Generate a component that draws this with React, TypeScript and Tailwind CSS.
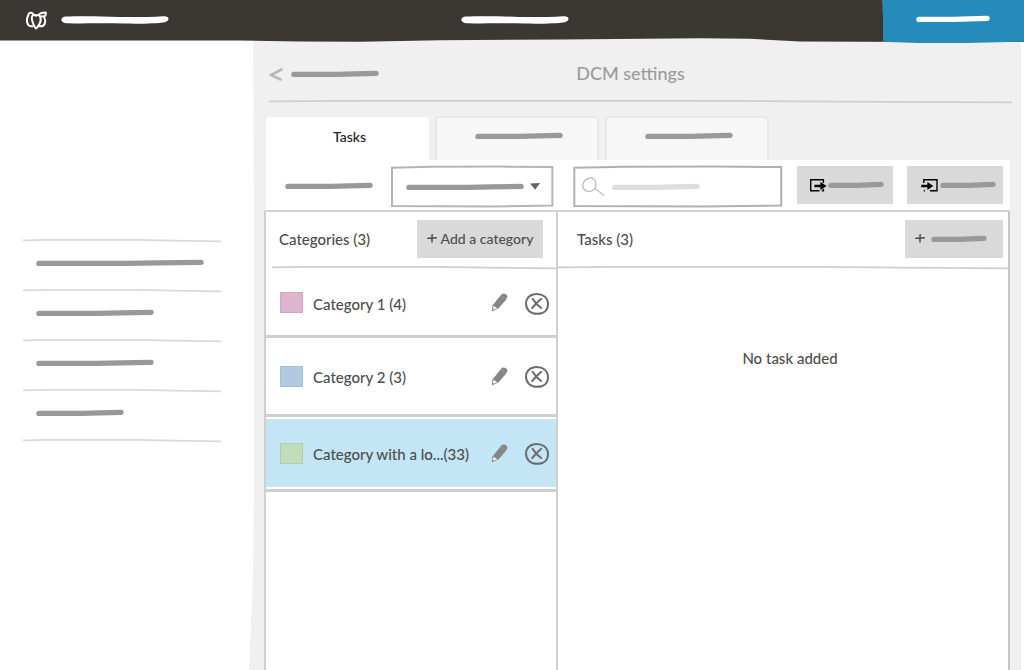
import React from 'react';
import clsx from 'clsx';

interface StrokeProps {
  className?: string;
}

// Placeholder text, drawn as one slightly rising marker stroke.
const Scribble: React.FC<StrokeProps> = ({ className }) => (
  <svg
    viewBox="0 0 100 6"
    preserveAspectRatio="none"
    className={clsx('h-1.5 shrink-0 overflow-visible px-[3px]', className)}
    aria-hidden="true"
  >
    <path
      d="M0 3.4 L52 3.4 L74 2.9 L100 2.4"
      fill="none"
      stroke="currentColor"
      strokeWidth="5.4"
      strokeLinecap="round"
      strokeLinejoin="round"
      vectorEffect="non-scaling-stroke"
    />
  </svg>
);

// Thicker brush stroke used for the titles in the top bar.
const BrushStroke: React.FC<StrokeProps> = ({ className }) => (
  <svg viewBox="0 0 108 8" className={clsx('h-2 shrink-0 text-white', className)} aria-hidden="true">
    <path
      d="M4 .6C18 .1 40 .2 58 1C76 1.2 90 1 102 .2C109-.3 109 4.6 104 6.2C96 7.4 80 8 64 7.6C42 7 20 7.8 5 7.2C-1 6.4-1 1.6 4 .6Z"
      fill="currentColor"
    />
  </svg>
);

const Rule: React.FC<StrokeProps> = ({ className }) => (
  <svg
    viewBox="0 0 200 4"
    preserveAspectRatio="none"
    className={clsx('block h-1 overflow-visible', className)}
    aria-hidden="true"
  >
    <path
      d="M0 1.4 L24 .8 L116 .8 L152 1.6 L200 2.4"
      fill="none"
      stroke="currentColor"
      strokeWidth="1.8"
      vectorEffect="non-scaling-stroke"
    />
  </svg>
);

const SketchFrame: React.FC<StrokeProps> = ({ className }) => (
  <svg
    viewBox="0 0 160 40"
    preserveAspectRatio="none"
    className={clsx('pointer-events-none absolute inset-0 h-full w-full overflow-visible', className)}
    aria-hidden="true"
  >
    <path
      d="M1 1.6 L40 .8 L110 .6 L159.4 1 L159.4 38.6 L100 39.4 L1 39 Z"
      fill="none"
      stroke="currentColor"
      strokeWidth="2"
      vectorEffect="non-scaling-stroke"
    />
  </svg>
);

const Logo: React.FC<StrokeProps> = ({ className }) => (
  <svg
    viewBox="0 0 22 19"
    className={clsx('h-[19px] w-[22px] shrink-0', className)}
    fill="none"
    stroke="#fff"
    strokeWidth="2"
    strokeLinejoin="round"
    aria-hidden="true"
  >
    <path d="M8.4 3.4C7.4 1.4 5 1.2 3.6 2.8C3.6 4.6 2.2 6 2 8C1.8 10 2.2 12.6 3.4 14.2C4.6 15.6 6.4 15.4 8 15.2" />
    <path d="M11 4.8C9.6 3.2 7.2 3.8 6.8 6.4C6.6 8.6 7.2 10.4 8 12C8.6 13.8 9.2 16.2 11 17.4C13 16.4 13.4 14.4 14.6 12.6C15.8 10.8 16 8 15.2 6C14.4 4 12.4 3.4 11 4.8Z" />
    <path d="M14 4.2C14.6 2 17.6 1.6 20.8 1.6C21.2 3.4 20.4 4.8 19.2 5.8C19.2 7.2 20.4 8.4 20.2 10.4C20 12.6 19.2 14.6 17.2 15.2C16 15.6 14.8 15.2 13.8 14.8" />
    <path d="M15.2 5.6C16.6 5 18 5 19.2 5.8" />
  </svg>
);

const PencilIcon = () => (
  <svg viewBox="0 0 17 19" className="h-[19px] w-[17px]" aria-hidden="true">
    <path d="M10.6 1.2C12.2-.4 17 1.4 16.2 4.4L14.6 7.2L7.6 15.2L.9 18.6L1.4 12.4Z" fill="#868686" />
    <path d="M2.6 12.8L6.2 15.2L2.6 16.8C1.9 16.2 2 14.4 2.6 12.8Z" fill="#f4f4f4" />
    <path d="M9.6 2.4L14.8 6.6" stroke="#a3a3a3" strokeWidth=".6" />
  </svg>
);

const RemoveIcon = () => (
  <svg viewBox="0 0 24 22" className="h-[22px] w-6" fill="none" stroke="#6c6c6c" strokeLinecap="round" aria-hidden="true">
    <path d="M9.4 1.2C4.4 1.8 1 5.6 1 10.6C1 16.6 5.4 20.8 12 20.8C18.8 20.8 23 17 23 11.2C23 4.8 18.4.4 9.4 1.2Z" strokeWidth="2" />
    <path d="M7.6 5.8C9.6 9.2 12.4 12.6 16.2 15M16.2 5.8C13.4 8.2 9.6 11.8 7.2 15.2" strokeWidth="2" />
  </svg>
);

const ExportIcon = () => (
  <svg viewBox="0 0 17 13" className="h-[13px] w-[17px] shrink-0" fill="none" stroke="#000" aria-hidden="true">
    <path d="M13.4 4V.7H.7V11.8H9.5M13.4 9.8V11.8H11.8" strokeWidth="1.4" />
    <path d="M4.4 7H11" strokeWidth="2.4" />
    <path d="M10.4 3L16.6 7L10.4 11Z" fill="#000" stroke="none" />
  </svg>
);

const ImportIcon = () => (
  <svg viewBox="0 0 17 13" className="h-[13px] w-[17px] shrink-0" fill="none" stroke="#000" aria-hidden="true">
    <path d="M2.8 4V.7H16V11.8H9M4 11.8H2.8" strokeWidth="1.4" />
    <path d="M.2 7H7" strokeWidth="2.4" />
    <path d="M6.4 3L12.4 7L6.4 11Z" fill="#000" stroke="none" />
  </svg>
);

const PlusIcon = () => (
  <svg viewBox="0 0 10 10" className="size-2.5 shrink-0" fill="none" stroke="#444" strokeWidth="1.4" aria-hidden="true">
    <path d="M.2 4.4C3 3.8 6 4.1 9.8 3.8M5.2 0C4.9 3.2 5 5.8 5 8.4" />
  </svg>
);

interface Category {
  name: string;
  count: number;
  swatch: string;
  row: string;
  selected?: boolean;
}

const categories: Category[] = [
  { name: 'Category 1 ', count: 4, swatch: 'border-[#d9a3c3] bg-[#deb5cf]', row: 'h-[68px]' },
  { name: 'Category 2 ', count: 3, swatch: 'border-[#9dbfda] bg-[#b3c9df]', row: 'h-[79px]' },
  { name: 'Category with a lo...', count: 33, swatch: 'border-[#acd0a4] bg-[#c0dcba]', row: 'h-[75px]', selected: true },
];

const menu = [
  { label: 'Menu entry 1', width: 'w-[168px]' },
  { label: 'Menu entry 2', width: 'w-[118px]' },
  { label: 'Menu entry 3', width: 'w-[118px]' },
  { label: 'Menu entry 4', width: 'w-[88px]' },
];

const TopBar = () => (
  <header className="relative z-10 flex h-10 shrink-0 bg-[#3b3733]">
    <svg
      viewBox="0 0 1024 4"
      preserveAspectRatio="none"
      className="absolute inset-x-0 top-[38px] h-1 w-full"
      aria-hidden="true"
    >
      <path d="M0 0H1024V4H0Z" fill="#f0f0f0" />
      <path d="M0 0H253V4H0Z" fill="#fff" />
      <path d="M0 0H1024V4L930 4L800 3.4L750 .8L700 .3L560 1.4L440 2.2L360 3.8L300 3.6L240 2.4L0 2.6Z" fill="#3b3733" />
    </svg>
    <div className="flex flex-1 items-center gap-3.5">
      <Logo className="ml-[25px]" />
      <BrushStroke className="w-[108px]" />
    </div>
    <div className="ml-1.5 flex items-center">
      <BrushStroke className="w-[108px]" />
    </div>
    <div className="flex flex-1 justify-end">
      <button
        type="button"
        aria-label="Account"
        className="relative flex h-[43px] w-[142px] items-center justify-center bg-[#258bbb] pb-1.5 text-white [clip-path:polygon(0_0,1px_40%,1px_97%,25%_100%,60%_100%,100%_97%,100%_0)]"
      >
        <Scribble className="w-[74px]" />
      </button>
    </div>
  </header>
);

const SideMenu = () => (
  <nav aria-label="Settings" className="w-[248px] shrink-0 pt-[199px] pl-[23px]">
    <ul className="w-[198px] text-[#d9d9d9]">
      {menu.map((item) => (
        <li key={item.label} className="h-[50px]">
          <Rule className="w-full" />
          <a href="#" aria-label={item.label} className="flex h-10 items-center pl-[13px] text-[#999]">
            <Scribble className={item.width} />
          </a>
        </li>
      ))}
      <li>
        <Rule className="w-full" />
      </li>
    </ul>
  </nav>
);

const Tabs = () => (
  <div role="tablist" className="flex h-11 gap-1.5 pl-0.5">
    <button
      type="button"
      role="tab"
      aria-selected="true"
      className="mt-px w-[163px] rounded-t-sm bg-white pb-1 pl-1 text-sm text-[#222]"
    >
      Tasks
    </button>
    {['Second tab', 'Third tab'].map((label) => (
      <button
        key={label}
        type="button"
        role="tab"
        aria-selected="false"
        aria-label={label}
        className="flex w-[164px] items-center justify-center rounded-t-sm border-2 border-b-0 border-[#e8e8e8] bg-[#f7f7f7] pb-1.5 pl-1 text-[#999]"
      >
        <Scribble className="w-[88px]" />
      </button>
    ))}
  </div>
);

const Toolbar = () => (
  <div className="flex h-[50px] items-start bg-white pt-1.5 pr-[7px] pl-[19px] text-[#999]">
    <label htmlFor="filter" aria-label="Filter" className="flex h-10 items-center">
      <Scribble className="w-[88px]" />
    </label>
    <div className="relative ml-[18px] h-[41px] w-[162px]">
      <select id="filter" className="h-full w-full appearance-none bg-transparent outline-none" />
      <SketchFrame className="text-[#b9b3ae]" />
      <div className="pointer-events-none absolute inset-0 flex items-center justify-between pr-[13px] pl-[15px]">
        <Scribble className="w-[118px]" />
        <svg viewBox="0 0 10 7" className="h-[7px] w-2.5 text-[#666]" aria-hidden="true">
          <path d="M0 .4L10 0L5.2 6.8Z" fill="currentColor" />
        </svg>
      </div>
    </div>
    <div className="relative ml-5 h-[41px] w-[209px]">
      <input type="search" aria-label="Search" className="h-full w-full bg-transparent pl-10 text-[#666] outline-none" />
      <SketchFrame className="text-[#b0b0b0]" />
      <div className="pointer-events-none absolute inset-0 flex items-center gap-1.5 pl-[9px] text-[#dedede]">
        <svg viewBox="0 0 24 20" className="h-5 w-6" fill="none" stroke="#b5b5b5" strokeWidth="1.2" aria-hidden="true">
          <path d="M6 1.6C10-.6 14.4 3 14 8C13.6 13 8.6 15.6 4.4 14C-.6 11.6-.6 4.4 6 1.6ZM13 11.4L22 18.6" />
        </svg>
        <Scribble className="w-[88px]" />
      </div>
    </div>
    <div className="ml-auto flex gap-3.5">
      <button type="button" aria-label="Export" className="flex h-[38px] w-24 items-center justify-center gap-px bg-[#d9d9d9] pl-1">
        <ExportIcon />
        <Scribble className="w-14" />
      </button>
      <button type="button" aria-label="Import" className="flex h-[38px] w-24 items-center justify-center gap-0.5 bg-[#d9d9d9] pl-1.5">
        <ImportIcon />
        <Scribble className="w-14" />
      </button>
    </div>
  </div>
);

const CategoryRow: React.FC<{ category: Category }> = ({ category }) => (
  <li className={clsx('border-b-[3px] border-[#cfcfcf] bg-white', category.row)}>
    <div
      className={clsx(
        'flex h-full items-center pr-[7px] pl-3.5',
        category.selected && 'border-y-2 border-white bg-[#c3e5f5]',
      )}
    >
      <span className={clsx('mr-2.5 h-[21px] w-[23px] shrink-0 border', category.swatch)} />
      <span className="mt-0.5 whitespace-nowrap">
        {category.name}({category.count})
      </span>
      <button type="button" aria-label={`Edit ${category.name}`} className="mr-[17px] ml-auto">
        <PencilIcon />
      </button>
      <button type="button" aria-label={`Remove ${category.name}`} className="mt-0.5">
        <RemoveIcon />
      </button>
    </div>
  </li>
);

const Categories = () => (
  <section className="flex w-[294px] shrink-0 flex-col border-x-2 border-[#cfcfcf]">
    <div className="flex h-[54px] items-center justify-between pr-[13px] pl-[13px]">
      <h2>Categories (3)</h2>
      <button
        type="button"
        className="flex h-[38px] w-[126px] items-center justify-center gap-1 bg-[#d9d9d9] text-sm font-medium whitespace-nowrap"
      >
        <PlusIcon />
        Add a category
      </button>
    </div>
    <Rule className="ml-1.5 w-[284px] text-[#cfcfcf]" />
    <ul>
      {categories.map((category) => (
        <CategoryRow key={category.name} category={category} />
      ))}
    </ul>
  </section>
);

const TaskList = () => (
  <section className="flex-1 border-r-2 border-[#c4c4c4]">
    <div className="flex h-[54px] items-center justify-between pr-[5px] pl-[19px]">
      <h2>Tasks (3)</h2>
      <button type="button" aria-label="Add a task" className="flex h-[38px] w-[98px] items-center gap-1.5 bg-[#d9d9d9] pl-2.5 text-[#999]">
        <PlusIcon />
        <Scribble className="w-14" />
      </button>
    </div>
    <Rule className="w-full text-[#cfcfcf]" />
    <p className="pt-[76px] pl-3.5 text-center">No task added</p>
  </section>
);

const App = () => (
  <div className="flex min-h-screen flex-col bg-white font-['Lato',sans-serif] text-[15px] leading-6 font-medium text-[#4d4d4d]">
    <TopBar />
    <div className="flex flex-1 pr-[3px]">
      <SideMenu />
      <main className="flex min-w-0 flex-1 flex-col bg-[#f0f0f0] pr-[11px] pl-4 [clip-path:polygon(5px_0,6px_30%,6px_70%,5px_85%,1px_100%,100%_100%,100%_0)]">
        <div className="grid h-[60px] grid-cols-[1fr_auto_1fr] items-center pt-1.5 pr-[18px] pl-[5px]">
          <a href="#" aria-label="Back" className="flex items-center gap-2 pt-0.5 text-[#999]">
            <svg viewBox="0 0 14 13" className="h-[13px] w-3.5" fill="none" stroke="#b8b8b8" strokeWidth="2.6" aria-hidden="true">
              <path d="M13.4 1L2 7L12.4 12" />
            </svg>
            <Scribble className="w-[88px]" />
          </a>
          <h1 className="text-lg text-[#9b9b9b]">DCM settings</h1>
        </div>
        <Rule className="-mr-0.5 ml-[5px] text-[#cfcfcf]" />
        <div className="h-3 shrink-0" />
        <Tabs />
        <div className="flex flex-1 flex-col">
          <div className="pl-0.5">
            <Toolbar />
          </div>
          <div className="flex flex-1 border-t-2 border-[#d4d4d4] bg-white">
            <Categories />
            <TaskList />
          </div>
        </div>
      </main>
    </div>
  </div>
);

export default App;
